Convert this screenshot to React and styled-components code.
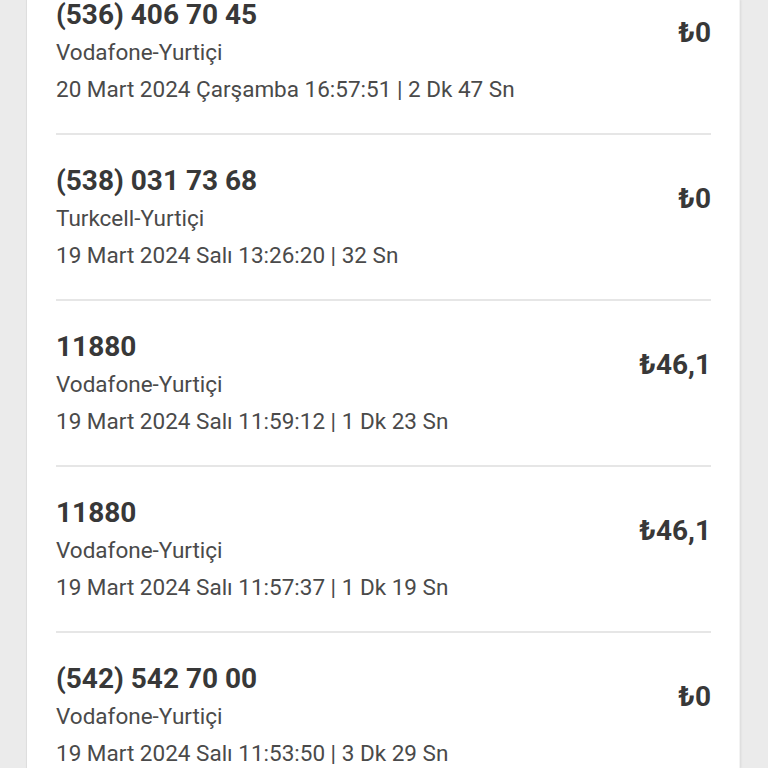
import React from 'react';
import styled, { createGlobalStyle } from 'styled-components';

const GlobalStyle = createGlobalStyle`
  html, body {
    margin: 0;
    padding: 0;
    height: 100%;
    overflow: hidden;
    background: #ebebeb;
  }
  body {
    font-family: Roboto, "Noto Sans", "Liberation Sans", sans-serif;
  }
`;

const Page = styled.div`
  height: 768px;
  display: flex;
  padding-left: 26px;
  background: #ebebeb;
`;

const Card = styled.div`
  width: 714px;
  background: #ffffff;
  border-left: 1px solid #dedede;
  border-right: 1px solid #f3f3f3;
  box-shadow: 1px 0 2px rgba(0, 0, 0, 0.08);
  padding: 0 28px 0 29px;
  box-sizing: border-box;
  overflow: hidden;
`;

const List = styled.div`
  margin-top: -31px;
  display: flex;
  flex-direction: column;
`;

const Row = styled.div`
  display: flex;
  justify-content: space-between;
  align-items: flex-start;
  padding: 29px 0 28px;
  border-bottom: 2px solid #e6e6e6;
`;

const Info = styled.div`
  display: flex;
  flex-direction: column;
`;

const Number = styled.div`
  font-size: 28px;
  line-height: 34px;
  font-weight: 700;
  color: #383838;
  margin-bottom: 4px;
`;

const Line = styled.div`
  font-size: 22.5px;
  line-height: 32px;
  color: #4a4a4a;
  margin-top: ${p => (p.$date ? '5px' : '0')};
`;

const Price = styled.div`
  margin-top: 18px;
  font-size: 28px;
  line-height: 34px;
  font-weight: 700;
  color: #383838;
`;

const calls = [
  { number: '(536) 406 70 45', operator: 'Vodafone-Yurtiçi', date: '20 Mart 2024 Çarşamba 16:57:51 | 2 Dk 47 Sn', price: '₺0' },
  { number: '(538) 031 73 68', operator: 'Turkcell-Yurtiçi', date: '19 Mart 2024 Salı 13:26:20 | 32 Sn', price: '₺0' },
  { number: '11880', operator: 'Vodafone-Yurtiçi', date: '19 Mart 2024 Salı 11:59:12 | 1 Dk 23 Sn', price: '₺46,1' },
  { number: '11880', operator: 'Vodafone-Yurtiçi', date: '19 Mart 2024 Salı 11:57:37 | 1 Dk 19 Sn', price: '₺46,1' },
  { number: '(542) 542 70 00', operator: 'Vodafone-Yurtiçi', date: '19 Mart 2024 Salı 11:53:50 | 3 Dk 29 Sn', price: '₺0' },
];

export default function App() {
  return (
    <>
      <GlobalStyle />
      <Page>
        <Card>
          <List>
            {calls.map((c, i) => (
              <Row key={i}>
                <Info>
                  <Number>{c.number}</Number>
                  <Line>{c.operator}</Line>
                  <Line $date>{c.date}</Line>
                </Info>
                <Price>{c.price}</Price>
              </Row>
            ))}
          </List>
        </Card>
      </Page>
    </>
  );
}
